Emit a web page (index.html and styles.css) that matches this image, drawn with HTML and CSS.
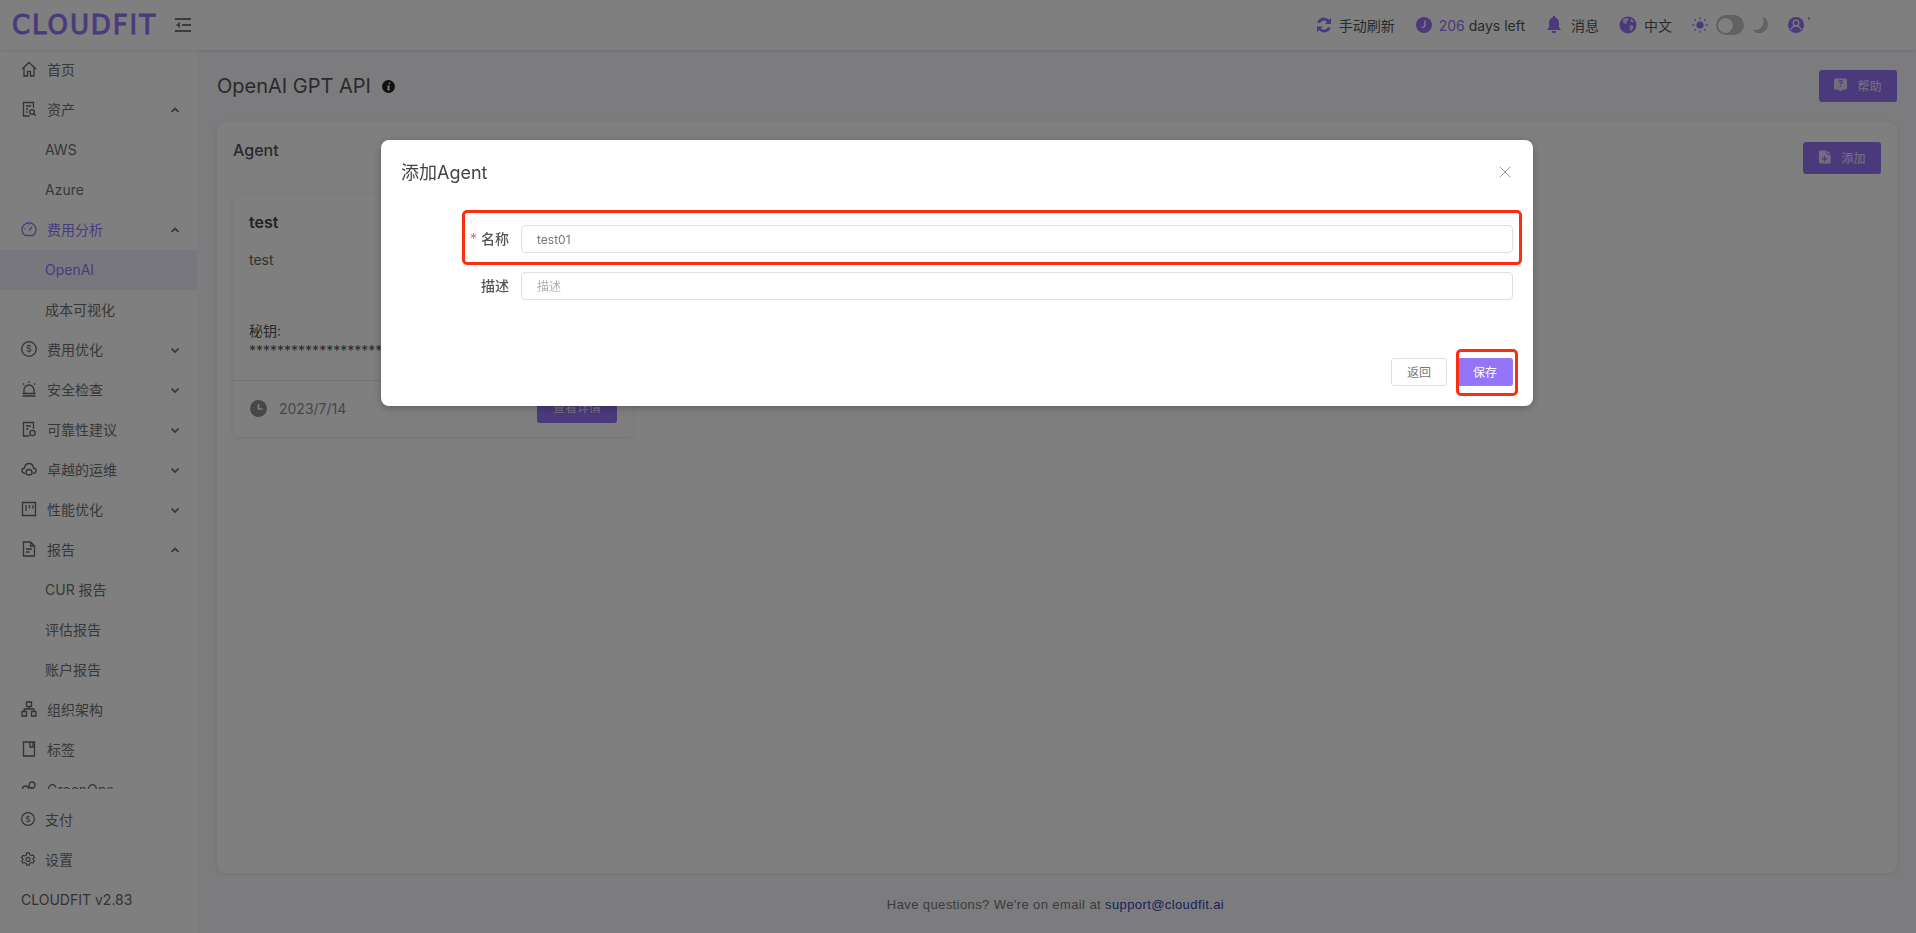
FILE: index.html
```html
<!DOCTYPE html>
<html lang="zh">
<head>
<meta charset="utf-8">
<title>CLOUDFIT</title>
<link rel="stylesheet" href="styles.css">
</head>
<body>
<div class="app">
  <header class="topbar">
    <div class="brand">
      <span class="logo">CLOUDFIT</span>
      <svg class="fold" viewBox="0 0 16 14"><path d="M0 0h16v2H0zM7 6h9v2H7zM0 12h16v2H0zM5 4v6L1 7z"/></svg>
    </div>
    <div class="tools">
      <div class="tool t-refresh">
        <svg class="ticon" viewBox="0 0 16 16"><path fill="#9575f7" d="M15 1v6H9l2-2.100A4.300 4.300 0 0 0 4 6.200L1.200 5.400A7 7 0 0 1 13 2.900zM1 15V9.500h6L5 11.400a4.300 4.300 0 0 0 7-1.400l2.800.9A7 7 0 0 1 3 13.100z"/></svg>
        <span>手动刷新</span>
      </div>
      <div class="tool t-days">
        <svg class="ticon" viewBox="0 0 16 18"><circle cx="8" cy="9" r="8" fill="#9575f7"/><path d="M9 4.500V10L6 12" fill="none" stroke="#fff" stroke-width="1.400"/></svg>
        <span><b class="num">206</b> days left</span>
      </div>
      <div class="tool t-bell">
        <svg class="ticon" viewBox="0 0 16 18"><path fill="#9575f7" d="M8 0a1.300 1.300 0 0 1 1.300 1.500C11.700 2.200 13 4.300 13 7v4l2 3H1l2-3V7c0-2.700 1.300-4.800 3.700-5.500A1.300 1.300 0 0 1 8 0zM5.800 15h4.400a2.200 2.200 0 0 1-4.400 0z"/></svg>
        <span>消息</span>
      </div>
      <div class="tool t-globe">
        <svg class="ticon globe" viewBox="0 0 18 18"><circle cx="9" cy="9" r="8.500" fill="#9575f7"/><path fill="#fff" opacity=".7" d="M5 2.500l3.500-.5 1 2-2 2 .5 2-2.500-.5L3.500 5.500zM11 9l3 .5.500 2.500-2.500 3-1.500-1.500zM12 2.500l3 3-1.500 1-2-1.500z"/></svg>
        <span>中文</span>
      </div>
      <div class="theme">
        <svg class="sun" viewBox="0 0 16 16"><circle cx="8" cy="8" r="3.600" fill="#9575f7"/><path stroke="#9575f7" stroke-width="1.300" stroke-linecap="round" d="M8 .7v1.200M8 14.100v1.200M.7 8h1.200M14.100 8h1.200M2.800 2.800l.8.8M12.400 12.400l.8.8M2.800 13.200l.8-.8M12.400 3.600l.8-.8"/></svg>
        <span class="toggle"><span class="knob"></span></span>
        <svg class="moon" viewBox="0 0 16 18"><path fill="#c4c4c4" d="M10 .5a8.500 8.500 0 0 1-9.500 13A8.500 8.500 0 1 0 10 .5z"/></svg>
      </div>
      <div class="user">
        <svg class="ticon avatar" viewBox="0 0 16 18"><circle cx="8" cy="9" r="8" fill="#9575f7"/><circle cx="8" cy="7" r="2.800" fill="none" stroke="#fff" stroke-width="1.200"/><path d="M3 14c.6-3 2.500-4 5-4s4.400 1 5 4" fill="none" stroke="#fff" stroke-width="1.200"/></svg>
        <span class="tick">'</span>
      </div>
    </div>
  </header>

  <div class="workspace">
    <aside class="sidebar">
      <nav class="menu">
        <a class="item"><svg class="micon" viewBox="0 0 16 16"><path d="M1 8l7-6.500L15 8M3 6.500V15h3.500v-4.500h3V15H13V6.500" class="ln"/></svg><span class="label">首页</span></a>
        <a class="item"><svg class="micon" viewBox="0 0 16 16"><path d="M12.500 7V1.500h-10v13.500h6M5 5h5M5 8h2M5 11h1.500" class="ln"/><circle cx="11" cy="11" r="2.300" class="ln"/><path d="M12.700 12.700l2 2" class="ln"/></svg><span class="label">资产</span><svg class="chev" viewBox="0 0 10 6"><path d="M1.500 5L5 1.500 8.500 5" class="ch"/></svg></a>
        <a class="item sub">AWS</a>
        <a class="item sub">Azure</a>
        <a class="item open"><svg class="micon" viewBox="0 0 16 16"><path d="M4 14.500a7 7 0 1 1 8 0z" class="ln pl"/><path d="M8 9.500l3-3.500M3.500 8h1M8 3.500v1" class="ln pl"/></svg><span class="label">费用分析</span><svg class="chev" viewBox="0 0 10 6"><path d="M1.500 5L5 1.500 8.500 5" class="ch"/></svg></a>
        <a class="item sub active">OpenAI</a>
        <a class="item sub">成本可视化</a>
        <a class="item"><svg class="micon" viewBox="0 0 16 16"><circle cx="8" cy="8" r="7.300" class="ln"/><text x="8" y="11" class="dollar">$</text></svg><span class="label">费用优化</span><svg class="chev" viewBox="0 0 10 6"><path d="M1.500 1.500L5 5l3.500-3.500" class="ch"/></svg></a>
        <a class="item"><svg class="micon" viewBox="0 0 16 16"><path d="M3 12V9a5 5 0 0 1 10 0v3M1.500 15h13M1.500 12.500h13M8 .5v1.500M2 2.500l1 1M14 2.500l-1 1" class="ln"/></svg><span class="label">安全检查</span><svg class="chev" viewBox="0 0 10 6"><path d="M1.500 1.500L5 5l3.500-3.500" class="ch"/></svg></a>
        <a class="item"><svg class="micon" viewBox="0 0 16 16"><path d="M12.500 8V1.500h-10v13.500h6M5 5h5M5 8h2.500" class="ln"/><circle cx="11.500" cy="12" r="2.600" class="ln"/></svg><span class="label">可靠性建议</span><svg class="chev" viewBox="0 0 10 6"><path d="M1.500 1.500L5 5l3.500-3.500" class="ch"/></svg></a>
        <a class="item"><svg class="micon" viewBox="0 0 16 16"><path d="M4 12.500c-4-.5-4-5-.5-5.500C4 3.500 6 2.500 8 2.500s4 1 4.500 4.500c3.500.5 3.500 5-.5 5.500" class="ln"/><path d="M5 11.500a3 3 0 0 1 6 0c0 1.700-1.300 2.500-3 2.500s-3-.8-3-2.500z" class="ln"/></svg><span class="label">卓越的运维</span><svg class="chev" viewBox="0 0 10 6"><path d="M1.500 1.500L5 5l3.500-3.500" class="ch"/></svg></a>
        <a class="item"><svg class="micon" viewBox="0 0 16 16"><path d="M1.500 1.500h13v13h-13zM5 4v6M8.500 4v3.500M12 4v3.500" class="ln"/></svg><span class="label">性能优化</span><svg class="chev" viewBox="0 0 10 6"><path d="M1.500 1.500L5 5l3.500-3.500" class="ch"/></svg></a>
        <a class="item"><svg class="micon" viewBox="0 0 16 16"><path d="M9.500 1H2.500v14h11V5zM9.500 1v4h4M5 8h6M5 11h3.500" class="ln"/></svg><span class="label">报告</span><svg class="chev" viewBox="0 0 10 6"><path d="M1.500 5L5 1.500 8.500 5" class="ch"/></svg></a>
        <a class="item sub">CUR 报告</a>
        <a class="item sub">评估报告</a>
        <a class="item sub">账户报告</a>
        <a class="item"><svg class="micon" viewBox="0 0 16 16"><path d="M5.500 1h5v4.500h-5zM1 10.500h4.500V15H1zM10.500 10.500H15V15h-4.500zM8 5.500V8M3.200 10.500V8h9.600v2.500" class="ln"/></svg><span class="label">组织架构</span></a>
        <a class="item"><svg class="micon" viewBox="0 0 16 16"><path d="M2.500 1h11v14h-11zM9 1v5h3V1" class="ln"/></svg><span class="label">标签</span></a>
        <a class="item"><svg class="micon" viewBox="0 0 16 16"><circle cx="11" cy="4" r="3" class="ln"/><circle cx="4.500" cy="8" r="3" class="ln"/><circle cx="11" cy="11" r="3" class="ln"/></svg><span class="label">GreenOps</span></a>
      </nav>
      <div class="menu-foot">
        <a class="item foot"><svg class="ficon" viewBox="0 0 16 16"><circle cx="8" cy="8" r="7.300" class="ln"/><text x="8" y="11" class="dollar">$</text></svg><span>支付</span></a>
        <a class="item foot"><svg class="ficon" viewBox="0 0 16 16"><path d="M6.500 1h3l.5 2 1.800 1 2-.6 1.500 2.600-1.500 1.500v1l1.500 1.500-1.500 2.600-2-.6-1.800 1-.5 2h-3l-.5-2-1.800-1-2 .6L.7 10.500 2.200 9V8L.7 6.500 2.200 3.900l2 .6L6 3.500z" class="ln"/><circle cx="8" cy="8.500" r="2.300" class="ln"/></svg><span>设置</span></a>
        <div class="item version">CLOUDFIT v2.83</div>
      </div>
    </aside>

    <main class="main">
      <div class="page-head">
        <h1 class="page-title">OpenAI GPT API <svg class="info" viewBox="0 0 12 12"><circle cx="6" cy="6" r="6" fill="#222"/><path d="M6.300 2.300h1.300v1.400H6.300zM5 5h2.200l-.6 3.400h.8v1H4.800l.6-3.400h-.6z" fill="#fff"/></svg></h1>
        <button class="btn-primary">
          <svg class="bicon" viewBox="0 0 14 14"><path d="M1.500 0h11A1.500 1.500 0 0 1 14 1.500v9a1.500 1.500 0 0 1-1.500 1.500H9l-2 2-2-2H1.500A1.500 1.500 0 0 1 0 10.500v-9A1.500 1.500 0 0 1 1.500 0z" fill="#fff" opacity=".75"/><text x="7" y="9.500" class="qmark">?</text></svg>
          帮助
        </button>
      </div>
      <section class="panel">
        <div class="panel-head">
          <h2 class="panel-title">Agent</h2>
          <button class="btn-primary">
            <svg class="bicon" viewBox="0 0 14 14"><path d="M2 0h7v3.500a1 1 0 0 0 1 1h3.500V13a1 1 0 0 1-1 1H2a1 1 0 0 1-1-1V1a1 1 0 0 1 1-1zM10 0l3.500 3.500H10zM6.300 6v2.300H4v1.400h2.300V12h1.400V9.700H10V8.300H7.700V6z" fill="#fff" fill-rule="evenodd" opacity=".75"/></svg>
            添加
          </button>
        </div>
        <article class="agent-card">
          <div class="agent-body">
            <h3 class="agent-name">test</h3>
            <p class="agent-desc">test</p>
            <p class="agent-key">秘钥:</p>
            <p class="agent-stars">****************************************</p>
          </div>
          <div class="agent-foot">
            <span class="agent-date"><svg class="clock" viewBox="0 0 17 17"><circle cx="8.500" cy="8.500" r="8.500" fill="#8e8e8e"/><path d="M8.500 4v5H12.500" fill="none" stroke="#fff" stroke-width="1.600"/></svg>2023/7/14</span>
            <button class="btn-primary btn-view">查看详情</button>
          </div>
        </article>
      </section>
      <footer class="page-foot">Have questions? We're on email at <a class="mail">support@cloudfit.ai</a></footer>
    </main>
  </div>
</div>

<div class="overlay">
  <div class="modal">
    <div class="modal-head">
      <span class="modal-title">添加Agent</span>
      <svg class="close" viewBox="0 0 12 12"><path d="M1 1l10 10M11 1L1 11" stroke="#9a9a9a" stroke-width="1" fill="none"/></svg>
    </div>
    <div class="modal-body">
      <div class="field">
        <label class="field-label"><span class="req">*</span>名称</label>
        <input class="field-input" value="test01">
      </div>
      <div class="field">
        <label class="field-label">描述</label>
        <input class="field-input" placeholder="描述">
      </div>
    </div>
    <div class="modal-foot">
      <button class="btn-back">返回</button>
      <button class="btn-save">保存</button>
    </div>
    <span class="mark mark-form"></span>
    <span class="mark mark-save"></span>
  </div>
</div>
</body>
</html>
```

FILE: styles.css
```css
* { box-sizing: border-box; }
html, body { margin: 0; height: 100%; overflow: hidden; }
body {
  font-family: "Inter", "Noto Sans CJK SC", sans-serif;
  font-size: 14px;
  color: #707070;
  background: #f8f8fd;
}
h1, h2, h3, p { margin: 0; font-weight: 400; }
button { font-family: inherit; cursor: pointer; padding: 0 0 2px; }

.app { display: flex; flex-direction: column; height: 933px; }

.topbar {
  flex: none;
  height: 50px;
  display: flex;
  justify-content: space-between;
  align-items: center;
  background: #fff;
  box-shadow: 0 1px 2px rgba(0, 0, 0, .1);
  position: relative;
  z-index: 1;
}
.brand { display: flex; align-items: center; padding-left: 12px; }
.logo {
  font-family: "DejaVu Sans", sans-serif;
  font-size: 26px;
  line-height: 26px;
  letter-spacing: 1.900px;
  color: #9575f7;
  width: 163px;
  -webkit-text-stroke: 1px #9575f7;
}
.fold { width: 16px; height: 14px; }
.fold path { fill: #787878; }

.tools { display: flex; align-items: center; padding-right: 104px; color: #555; font-size: 14px; }
.tool { display: flex; align-items: center; gap: 7px; }
.t-refresh { margin-right: 21px; }
.t-days { margin-right: 21px; }
.t-bell { margin-right: 20px; gap: 9px; }
.t-globe { margin-right: 20px; }
.ticon { width: 16px; height: 18px; flex: none; }
.globe { width: 18px; height: 18px; }
.num { font-weight: 400; color: #9575f7; }
.theme { display: flex; align-items: center; gap: 8px; margin-right: 20px; }
.sun { width: 16px; height: 16px; }
.moon { width: 16px; height: 18px; }
.toggle {
  width: 28px;
  height: 20px;
  border-radius: 10px;
  background: #c4c4c4;
  display: flex;
  align-items: center;
  padding-left: 2px;
}
.knob { width: 15px; height: 15px; border-radius: 50%; background: #fff; box-shadow: 0 0 0 1px #bbb; }
.user { display: flex; align-items: center; width: 24px; }
.tick { color: #9575f7; font-size: 12px; margin-left: 3px; line-height: 12px; margin-top: -6px; }

.workspace { flex: 1; display: flex; min-height: 0; }

.sidebar {
  flex: none;
  width: 197px;
  background: #fff;
  display: flex;
  flex-direction: column;
}
.menu { height: 739px; overflow: hidden; flex: none; }
.menu-foot { padding-top: 11px; }
.item {
  height: 40px;
  display: flex;
  align-items: center;
  padding: 0 0 2px 21px;
  color: #707070;
  position: relative;
}
.micon { width: 16px; height: 16px; flex: none; margin-right: 10px; }
.ficon { width: 14px; height: 14px; flex: none; margin-right: 10px; }
.ln { fill: none; stroke: #666; stroke-width: 1.300; }
.ln.pl { stroke: #9575f7; }
.dollar { font-size: 9px; fill: #666; text-anchor: middle; font-family: "Inter", sans-serif; }
.chev { position: absolute; left: 170px; top: 17px; width: 10px; height: 6px; }
.ch { fill: none; stroke: #666; stroke-width: 1.700; }
.sub { padding-left: 45px; }
.open { color: #9575f7; }
.active { background: #f3eefc; color: #9575f7; }
.foot { font-size: 14px; }
.version { color: #666; font-size: 14px; }

.main {
  flex: 1;
  min-width: 0;
  display: flex;
  flex-direction: column;
  padding: 20px 19px 0 20px;
}
.page-head { display: flex; justify-content: space-between; align-items: center; height: 32px; margin-bottom: 20px; }
.page-title { font-size: 20px; color: #555; display: flex; align-items: center; gap: 11px; }
.info { width: 13px; height: 13px; }

.btn-primary {
  height: 32px;
  width: 78px;
  border: 0;
  border-radius: 3px;
  background: #9575f7;
  color: rgba(255, 255, 255, .85);
  font-size: 12px;
  display: inline-flex;
  align-items: center;
  justify-content: center;
  gap: 10px;
}
.bicon { width: 13px; height: 14px; }
.qmark { font-size: 9px; font-weight: 700; fill: #9575f7; text-anchor: middle; font-family: "Inter", sans-serif; }

.panel {
  height: 751px;
  border-radius: 8px;
  background: #fff;
  padding: 20px 16px 0;
  box-shadow: 0 1px 4px rgba(0, 0, 0, .08);
}
.panel-head { display: flex; justify-content: space-between; align-items: flex-start; height: 32px; margin-bottom: 20px; }
.panel-title { font-size: 16px; line-height: 16px; color: #555; font-weight: 500; }

.agent-card {
  width: 400px;
  height: 243px;
  border-radius: 4px;
  background: #fff;
  box-shadow: 0 1px 6px rgba(0, 0, 0, .09);
}
.agent-body { height: 187px; padding: 20px 16px 0; border-bottom: 1px solid #e6e6e6; }
.agent-name { font-size: 16px; line-height: 16px; font-weight: 600; color: #444; }
.agent-desc { margin-top: 20px; line-height: 20px; color: #666; }
.agent-key { margin-top: 51px; line-height: 20px; color: #555; }
.agent-stars { margin-top: 1px; line-height: 18px; color: #555; white-space: nowrap; overflow: hidden; }
.agent-foot { display: flex; justify-content: space-between; align-items: center; padding: 10px 16px 13px 17px; }
.agent-date { display: flex; align-items: center; gap: 12px; color: #8e8e8e; font-size: 14px; padding-top: 3px; }
.clock { width: 17px; height: 17px; }
.btn-view { width: 80px; }

.page-foot { text-align: center; font-size: 13px; line-height: 16px; margin-top: 24px; padding-right: 3px; color: #777; font-family: "Liberation Sans", sans-serif; letter-spacing: .4px; }
.mail { color: #2f45b0; }

.overlay {
  position: fixed;
  inset: 0;
  background: rgba(0, 0, 0, .5);
  padding: 140px 0 0 381px;
  z-index: 10;
}
.modal {
  position: relative;
  width: 1152px;
  height: 266px;
  border-radius: 8px;
  background: #fff;
  box-shadow: 0 2px 8px rgba(0, 0, 0, .25);
  display: flex;
  flex-direction: column;
  padding: 0 20px;
}
.modal-head { height: 64px; display: flex; justify-content: space-between; align-items: center; flex: none; padding-right: 2px; }
.modal-title { font-size: 18px; color: #444; margin-top: -2px; }
.close { width: 12px; height: 12px; margin-top: -1px; }
.modal-body { padding-top: 21px; flex: 1; }
.field { display: flex; align-items: center; margin-bottom: 19px; }
.field-label {
  width: 120px;
  padding: 0 12px 2px 0;
  text-align: right;
  font-weight: 500;
  color: #555;
  font-size: 14px;
}
.req { color: #d46b8a; margin-right: 4px; font-weight: 400; }
.field-input {
  flex: 1;
  height: 28px;
  border: 1px solid #dedee6;
  border-radius: 4px;
  padding: 0 15px;
  font-family: inherit;
  font-size: 12px;
  color: #777;
  outline: 0;
}
.field-input::placeholder { color: #b0b0b0; }
.modal-foot { display: flex; justify-content: flex-end; gap: 10px; padding-bottom: 20px; flex: none; }
.btn-back, .btn-save { width: 56px; height: 28px; border-radius: 3px; font-size: 12px; }
.btn-back { background: #fff; border: 1px solid #dedee6; color: #777; }
.btn-save { background: #9575f7; border: 0; color: #fff; }

.mark { position: absolute; border: 3px solid #ff2d0f; border-radius: 5px; pointer-events: none; }
.mark-form { left: 81px; top: 70px; width: 1060px; height: 55px; }
.mark-save { left: 1075px; top: 209px; width: 62px; height: 47px; }
```
